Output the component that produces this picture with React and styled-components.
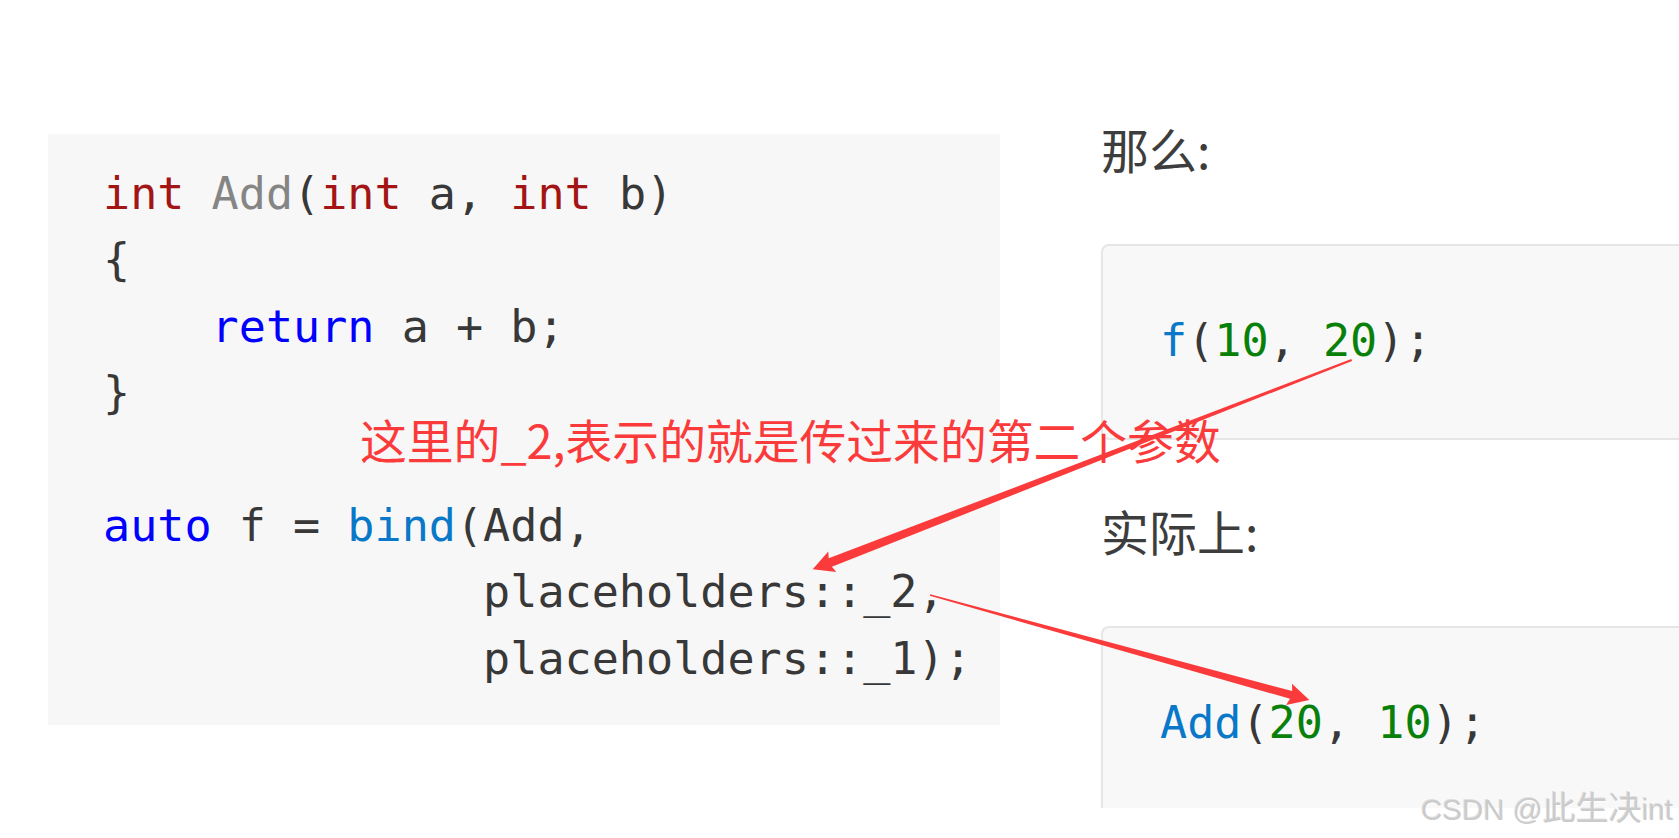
import React from "react";
import styled, { createGlobalStyle } from "styled-components";

const GlobalStyle = createGlobalStyle`
  html, body {
    margin: 0;
    padding: 0;
    background: #ffffff;
    overflow: hidden;
  }
`;

const RED = "#fb3b3b";

// tapered arrow like the screenshot tool draws it
function arrowPoints(sx, sy, tx, ty, head = 21, half = 11, w0 = 2, w1 = 9) {
  const dx = tx - sx;
  const dy = ty - sy;
  const len = Math.hypot(dx, dy);
  const ux = dx / len;
  const uy = dy / len;
  const nx = -uy;
  const ny = ux;
  const bx = tx - ux * head;
  const by = ty - uy * head;
  const kx = tx - ux * head * 0.9;
  const ky = ty - uy * head * 0.9;
  const pts = [
    [sx + (nx * w0) / 2, sy + (ny * w0) / 2],
    [kx + (nx * w1) / 2, ky + (ny * w1) / 2],
    [bx + nx * half, by + ny * half],
    [tx, ty],
    [bx - nx * half, by - ny * half],
    [kx - (nx * w1) / 2, ky - (ny * w1) / 2],
    [sx - (nx * w0) / 2, sy - (ny * w0) / 2],
  ];
  return pts.map(([x, y]) => `${x.toFixed(1)},${y.toFixed(1)}`).join(" ");
}

function App() {
  return (
    <>
      <GlobalStyle />
      <Page>
        <LeftColumn>
          <CodeBlock>
            <Kw $c="type">int</Kw> <Kw $c="fn">Add</Kw>(<Kw $c="type">int</Kw> a, <Kw $c="type">int</Kw> b)
            {"\n{\n    "}
            <Kw $c="kw">return</Kw> a + b;
            {"\n}\n\n"}
            <Kw $c="kw">auto</Kw> f = <Kw $c="call">bind</Kw>(Add,
            {"\n              "}placeholders::_2,
            {"\n              "}placeholders::_1);
          </CodeBlock>
        </LeftColumn>

        <RightColumn>
          <Para>那么:</Para>
          <SnippetBox>
            <Kw $c="call">f</Kw>(<Kw $c="num">10</Kw>, <Kw $c="num">20</Kw>);
          </SnippetBox>
          <Para $gap={66}>实际上:</Para>
          <SnippetBox $cut>
            <Kw $c="call">Add</Kw>(<Kw $c="num">20</Kw>, <Kw $c="num">10</Kw>);
          </SnippetBox>
        </RightColumn>

        <Note>这里的_2,表示的就是传过来的第二个参数</Note>

        <Arrows width="1679" height="838" viewBox="0 0 1679 838">
          <polygon points={arrowPoints(1351.7, 360, 812.7, 569.3)} fill={RED} />
          <polygon points={arrowPoints(930, 595, 1309.3, 700, 21, 11, 1.6, 8)} fill={RED} />
        </Arrows>

        <Watermark>
          CSDN @<Cjk>此生决</Cjk>int
        </Watermark>
      </Page>
    </>
  );
}

export default App;

const Page = styled.div`
  position: relative;
  width: 1679px;
  height: 838px;
  overflow: hidden;
  display: flex;
  align-items: flex-start;
  background: #ffffff;
`;

const LeftColumn = styled.div`
  flex: 0 0 auto;
  padding: 134px 0 0 48px;
`;

const CodeBlock = styled.pre`
  box-sizing: border-box;
  width: 952px;
  height: 591px;
  margin: 0;
  padding: 27px 0 0 55px;
  background: #f7f7f7;
  color: #383838;
  font-family: "DejaVu Sans Mono", "Liberation Mono", monospace;
  font-size: 45.1px;
  line-height: 66.4px;
  white-space: pre;
`;

const colors = {
  type: "#a31515",
  fn: "#858585",
  kw: "#0000ff",
  call: "#0a78c8",
  num: "#098009",
};

const Kw = styled.span`
  color: ${(p) => colors[p.$c]};
`;

const RightColumn = styled.div`
  flex: 0 0 auto;
  display: flex;
  flex-direction: column;
  width: 640px;
  padding: 124px 0 0 101px;
`;

const Para = styled.p`
  margin: ${(p) => p.$gap || 0}px 0 72px 0;
  color: #3d3d3d;
  font-family: "Noto Sans CJK SC", "Noto Sans", sans-serif;
  font-size: 48px;
  line-height: 48px;
`;

const SnippetBox = styled.pre`
  box-sizing: border-box;
  margin: 0;
  padding: ${(p) => (p.$cut ? "62px 0 52px 57px" : "62px 0 63.6px 57px")};
  background: #f8f8f8;
  border: 2px solid #e6e6e6;
  border-bottom: ${(p) => (p.$cut ? "none" : "2px solid #e6e6e6")};
  border-radius: ${(p) => (p.$cut ? "8px 8px 0 0" : "8px")};
  color: #383838;
  font-family: "DejaVu Sans Mono", "Liberation Mono", monospace;
  font-size: 45.1px;
  line-height: 66.4px;
  white-space: pre;
`;

const Note = styled.div`
  position: absolute;
  left: 360px;
  top: 416px;
  color: ${RED};
  font-family: "Noto Sans CJK SC", "Noto Sans", sans-serif;
  font-size: 46.8px;
  line-height: 46.8px;
  white-space: nowrap;
`;

const Arrows = styled.svg`
  position: absolute;
  left: 0;
  top: 0;
  pointer-events: none;
`;

const Watermark = styled.div`
  position: absolute;
  left: 1421px;
  top: 792px;
  color: #cbcbcb;
  font-family: "Liberation Sans", "Noto Sans CJK SC", sans-serif;
  font-size: 29.5px;
  line-height: 29.5px;
  white-space: nowrap;
  text-shadow: 1px 1px 0 rgba(255, 255, 255, 0.9), -1px -1px 0 rgba(150, 150, 150, 0.25);
`;

const Cjk = styled.span`
  font-family: "Noto Sans CJK SC", sans-serif;
  font-size: 33px;
`;
